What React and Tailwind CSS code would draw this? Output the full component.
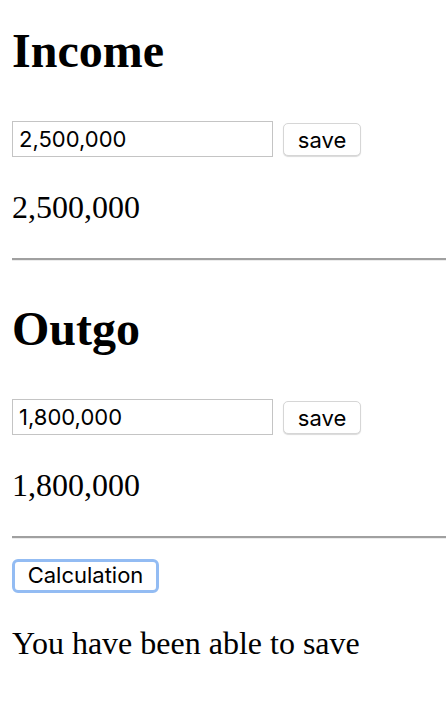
import React, { useState } from "react";

const sans = "font-['Inter','Liberation_Sans',sans-serif]";

function Entry({ title, value, setValue, saved, onSave }) {
  return (
    <section>
      <h1 className="text-[48px] leading-[56px] font-bold">{title}</h1>
      <div className="mt-[42px] flex items-center gap-[10px]">
        <input
          type="text"
          value={value}
          onChange={(e) => setValue(e.target.value)}
          className={`${sans} h-[36px] w-[261px] border border-[#c4c4c4] px-[6px] text-[22px] text-black outline-none`}
        />
        <button
          onClick={onSave}
          className={`${sans} h-[33px] w-[78px] rounded-[5px] border border-[#d6d6d6] bg-white text-[22px] shadow-[0_1px_1px_rgba(0,0,0,0.15)]`}
        >
          save
        </button>
      </div>
      <p className="mt-[32px] text-[32px] leading-[36px]">{saved}</p>
      <hr className="mt-[33px] border-0 border-t-2 border-t-[#a0a0a0] border-b border-b-[#ececec]" />
    </section>
  );
}

export default function App() {
  const [income, setIncome] = useState("2,500,000");
  const [outgo, setOutgo] = useState("1,800,000");
  const [savedIncome, setSavedIncome] = useState("2,500,000");
  const [savedOutgo, setSavedOutgo] = useState("1,800,000");
  const [result, setResult] = useState("You have been able to save");

  const toNum = (s) => Number(String(s).replace(/,/g, "")) || 0;

  const calculate = () => {
    const diff = toNum(savedIncome) - toNum(savedOutgo);
    setResult(diff >= 0 ? "You have been able to save" : "You are over budget");
  };

  return (
    <div className="min-h-screen overflow-hidden bg-white pl-[12px] pt-[23px] font-['Liberation_Serif',serif] text-black">
      <Entry
        title="Income"
        value={income}
        setValue={setIncome}
        saved={savedIncome}
        onSave={() => setSavedIncome(income)}
      />
      <div className="mt-[40px]">
        <Entry
          title="Outgo"
          value={outgo}
          setValue={setOutgo}
          saved={savedOutgo}
          onSave={() => setSavedOutgo(outgo)}
        />
      </div>
      <button
        onClick={calculate}
        className={`${sans} mt-[20px] h-[34px] w-[147px] rounded-[6px] border-[3px] border-[#93bcf3] bg-white pb-[3px] text-[22px] leading-none`}
      >
        Calculation
      </button>
      <p className="mt-[32px] text-[32px] leading-[36px]">{result}</p>
    </div>
  );
}
